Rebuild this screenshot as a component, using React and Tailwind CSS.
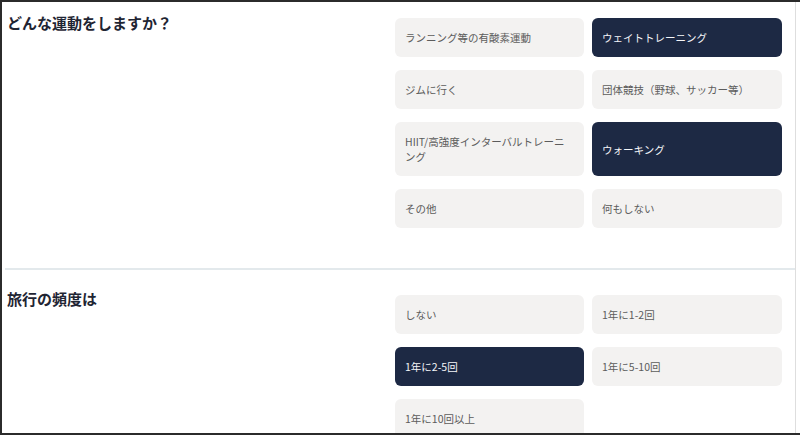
import React from "react";

const font = { fontFamily: '"Noto Sans CJK JP", "Noto Sans", sans-serif' };

function Opt({ label, selected }) {
  return (
    <div
      className={
        "flex items-center rounded-[6px] px-[10px] py-[12px] text-[10.5px] font-normal leading-[15px] " +
        (selected ? "bg-[#1d2944] text-[#f4f5f8]" : "bg-[#f3f2f1] text-[#5c5c5c]")
      }
    >
      <span>{label}</span>
    </div>
  );
}

function Section({ title, options, pt, heading }) {
  return (
    <div className={"flex items-start justify-between pl-[5px] pr-[13px] " + pt}>
      <div className={"text-[15px] font-bold leading-[22px] text-[#1f2533] " + heading}>{title}</div>
      <div className="grid w-[387px] grid-cols-[189px_190px] gap-x-[8px] gap-y-[13px]">
        {options.map((o) => (
          <Opt key={o.label} {...o} />
        ))}
      </div>
    </div>
  );
}

export default function App() {
  return (
    <div
      style={font}
      className="h-[435px] w-[800px] overflow-hidden border-b-2 border-l-2 border-t-2 border-[#2b2b2b] bg-white"
    >
      <div className="h-full w-[794px] border-r border-[#dedede]">
        <Section
          title="どんな運動をしますか？"
          pt="pt-[16px] pb-[40px]"
          heading="-mt-[6px]"
          options={[
            { label: "ランニング等の有酸素運動" },
            { label: "ウェイトトレーニング", selected: true },
            { label: "ジムに行く" },
            { label: "団体競技（野球、サッカー等）" },
            { label: "HIIT/高強度インターバルトレーニング" },
            { label: "ウォーキング", selected: true },
            { label: "その他" },
            { label: "何もしない" },
          ]}
        />
        <div className="ml-[3px] h-[2px] bg-[#e3e9ec]" />
        <Section
          title="旅行の頻度は"
          pt="pt-[25px]"
          heading="-mt-[7px]"
          options={[
            { label: "しない" },
            { label: "1年に1-2回" },
            { label: "1年に2-5回", selected: true },
            { label: "1年に5-10回" },
            { label: "1年に10回以上" },
          ]}
        />
      </div>
    </div>
  );
}
